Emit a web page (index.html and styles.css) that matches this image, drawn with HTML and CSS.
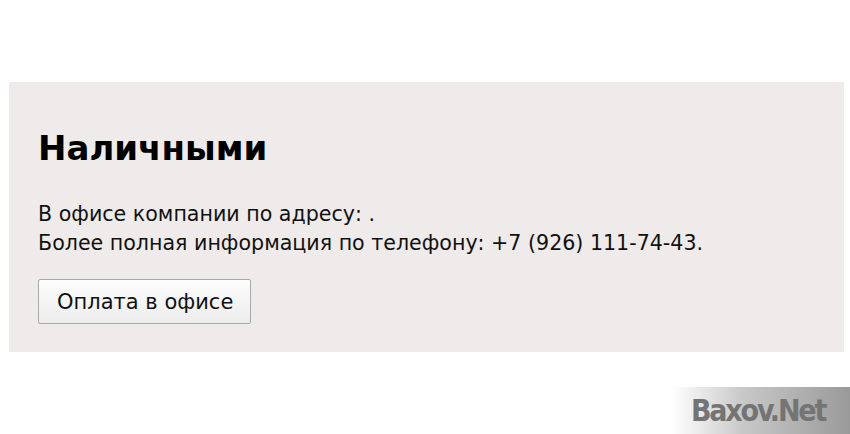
FILE: index.html
```html
<!DOCTYPE html>
<html lang="ru">
<head>
    <meta charset="UTF-8">
    <title>Оплата наличными</title>
    <link rel="stylesheet" href="styles.css">
</head>
<body>
    <div class="page">
        <div class="pay-block">
            <h2 class="pay-title">Наличными</h2>
            <p class="pay-text">
                В офисе компании по адресу: .<br>
                Более полная информация по телефону: +7 (926) 111-74-43.
            </p>
            <button class="pay-btn">Оплата в офисе</button>
        </div>
    </div>
    <div class="watermark">Baxov.Net</div>
</body>
</html>
```

FILE: styles.css
```css
body {
    margin: 0;
    background: #fff;
    font-family: "DejaVu Sans", Verdana, sans-serif;
    color: #111;
}

.page {
    padding: 82px 6px 0 9px;
}

.pay-block {
    background-color: #efebea;
    padding: 46px 29px 0;
    height: 224px;
}

.pay-title {
    margin: 0 0 32px;
    font-size: 34px;
    font-weight: bold;
    color: #000;
    line-height: 40px;
}

.pay-text {
    margin: 0 0 21px;
    font-size: 20.6px;
    line-height: 29px;
}

.pay-btn {
    font-family: inherit;
    font-size: 21px;
    color: #111;
    height: 45px;
    padding: 0 17px 0 18px;
    border: 1px solid #a9a9a9;
    border-radius: 2px;
    background: linear-gradient(#fdfdfd, #ececec);
}

/* водяной знак в углу */
.watermark {
    position: absolute;
    right: 0;
    bottom: 0;
    width: 178px;
    height: 47px;
    background: linear-gradient(to right, #fff, #c8c8c8 40%, #9a9a9a);
    font-family: "DejaVu Sans Condensed", "DejaVu Sans", sans-serif;
    font-stretch: condensed;
    font-weight: bold;
    font-size: 30px;
    letter-spacing: -2.2px;
    color: #747474;
    line-height: 47px;
    padding-left: 19px;
    box-sizing: border-box;
}
```
